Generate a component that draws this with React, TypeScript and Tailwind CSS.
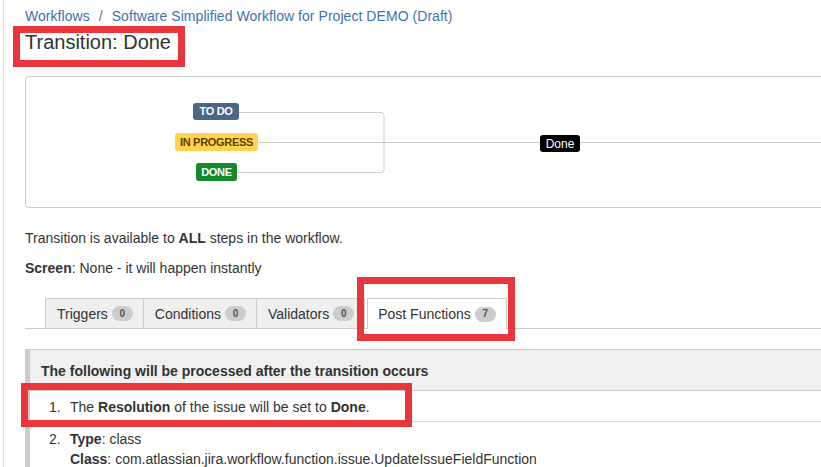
import React from "react";

type Tab = { label: string; count: number; active?: boolean };

const tabs: Tab[] = [
  { label: "Triggers", count: 0 },
  { label: "Conditions", count: 0 },
  { label: "Validators", count: 0 },
  { label: "Post Functions", count: 7, active: true },
];

function Lozenge({ text, className }: { text: string; className: string }) {
  return (
    <span
      className={`absolute flex items-center justify-center rounded-[3px] text-[11px] font-bold uppercase leading-none tracking-[-0.3px] ${className}`}
    >
      {text}
    </span>
  );
}

function Diagram() {
  return (
    <div className="relative mt-[22px] h-[132px] w-[900px] rounded-[4px] border border-[#cccccc]">
      {/* connector lines */}
      <svg className="absolute left-0 top-0" width="900" height="130">
        <path
          d="M188 35.5 H355 a3 3 0 0 1 3 3 V92.5 a3 3 0 0 1 -3 3 H188"
          fill="none"
          stroke="#cccccc"
          strokeWidth="1"
        />
        <path d="M232 65.5 H900" fill="none" stroke="#cccccc" strokeWidth="1" />
      </svg>
      <Lozenge text="To Do" className="left-[167px] top-[26px] h-[17px] w-[46px] bg-[#4a6785] text-white" />
      <Lozenge text="In Progress" className="left-[149px] top-[56px] h-[18px] w-[83px] bg-[#ffd351] text-[#594300]" />
      <Lozenge text="Done" className="left-[170px] top-[86px] h-[18px] w-[41px] bg-[#14892c] text-white" />
      <span className="absolute left-[514px] top-[58px] flex h-[17px] w-[40px] items-center justify-center rounded-[3px] bg-black text-[12px] leading-none text-white">
        Done
      </span>
    </div>
  );
}

function Tabs() {
  return (
    <div className="mt-[20px] flex h-[31px] w-[900px] items-end border-b border-[#cccccc] pl-[20px]">
      {tabs.map((tab) => (
        <div
          key={tab.label}
          className={
            tab.active
              ? "-mb-px ml-[2px] flex h-[31px] items-center border border-b-0 border-[#cccccc] bg-white pl-[10px] pr-[10px]"
              : "-mb-px flex h-[31px] items-center border border-l-0 border-[#cccccc] bg-[#efefef] pl-[11px] pr-[10px] first:border-l"
          }
        >
          <span className="text-[14px] leading-none">{tab.label}</span>
          <span className="ml-[4px] flex h-[15px] w-[21px] items-center justify-center rounded-full bg-[#cccccc] text-[10px] font-bold leading-none text-[#555]">
            {tab.count}
          </span>
        </div>
      ))}
    </div>
  );
}

function PostFunctions() {
  return (
    <div className="mt-[20px] w-[900px] border-l-[5px] border-t border-[#cccccc]">
      <div className="flex h-[41px] items-center border-b border-[#cccccc] bg-[#f0f0f0] pl-[11px] pt-[3px] text-[14px] font-bold">
        The following will be processed after the transition occurs
      </div>
      <ol className="text-[14px] leading-[20px]">
        <li className="flex h-[31px] items-center border-b border-[#dddddd] pl-[19px] pt-[2px]">
          <span className="w-[21px]">1.</span>
          <span>
            The <b>Resolution</b> of the issue will be set to <b>Done</b>.
          </span>
        </li>
        <li className="flex pl-[19px] pt-[7px]">
          <span className="w-[21px]">2.</span>
          <div>
            <div>
              <b>Type</b>: class
            </div>
            <div>
              <b>Class</b>: com.atlassian.jira.workflow.function.issue.UpdateIssueFieldFunction
            </div>
          </div>
        </li>
      </ol>
    </div>
  );
}

export default function App() {
  return (
    <div className="relative h-[467px] w-[821px] overflow-hidden bg-white font-['Liberation_Sans',Arial,sans-serif] text-[#333333]">
      <div className="ml-[3px] h-full border-l border-[#dddddd] pl-[21px]">
        <div className="pt-[7px] text-[14px] leading-[18px] tracking-[0.05px] text-[#3b73af]">
          Workflows<span className="mx-[9px] text-[#707070]">/</span>Software Simplified Workflow for Project DEMO (Draft)
        </div>
        <h1 className="mt-[5px] text-[20px] font-normal leading-[24px]">Transition: Done</h1>

        <Diagram />

        <p className="mt-[20px] text-[14px] leading-[20px]">
          Transition is available to <b>ALL</b> steps in the workflow.
        </p>
        <p className="mt-[10px] text-[14px] leading-[20px]">
          <b>Screen</b>: None - it will happen instantly
        </p>

        <Tabs />
        <PostFunctions />
      </div>

      {/* highlight boxes drawn over the screenshot */}
      <div className="absolute left-[13px] top-[26px] h-[41px] w-[172px] border-[7px] border-[#e8363c]" />
      <div className="absolute left-[357px] top-[277px] h-[64px] w-[158px] border-[7px] border-[#e8363c]" />
      <div className="absolute left-[21px] top-[383px] h-[44px] w-[391px] border-[7px] border-[#e8363c]" />
    </div>
  );
}
